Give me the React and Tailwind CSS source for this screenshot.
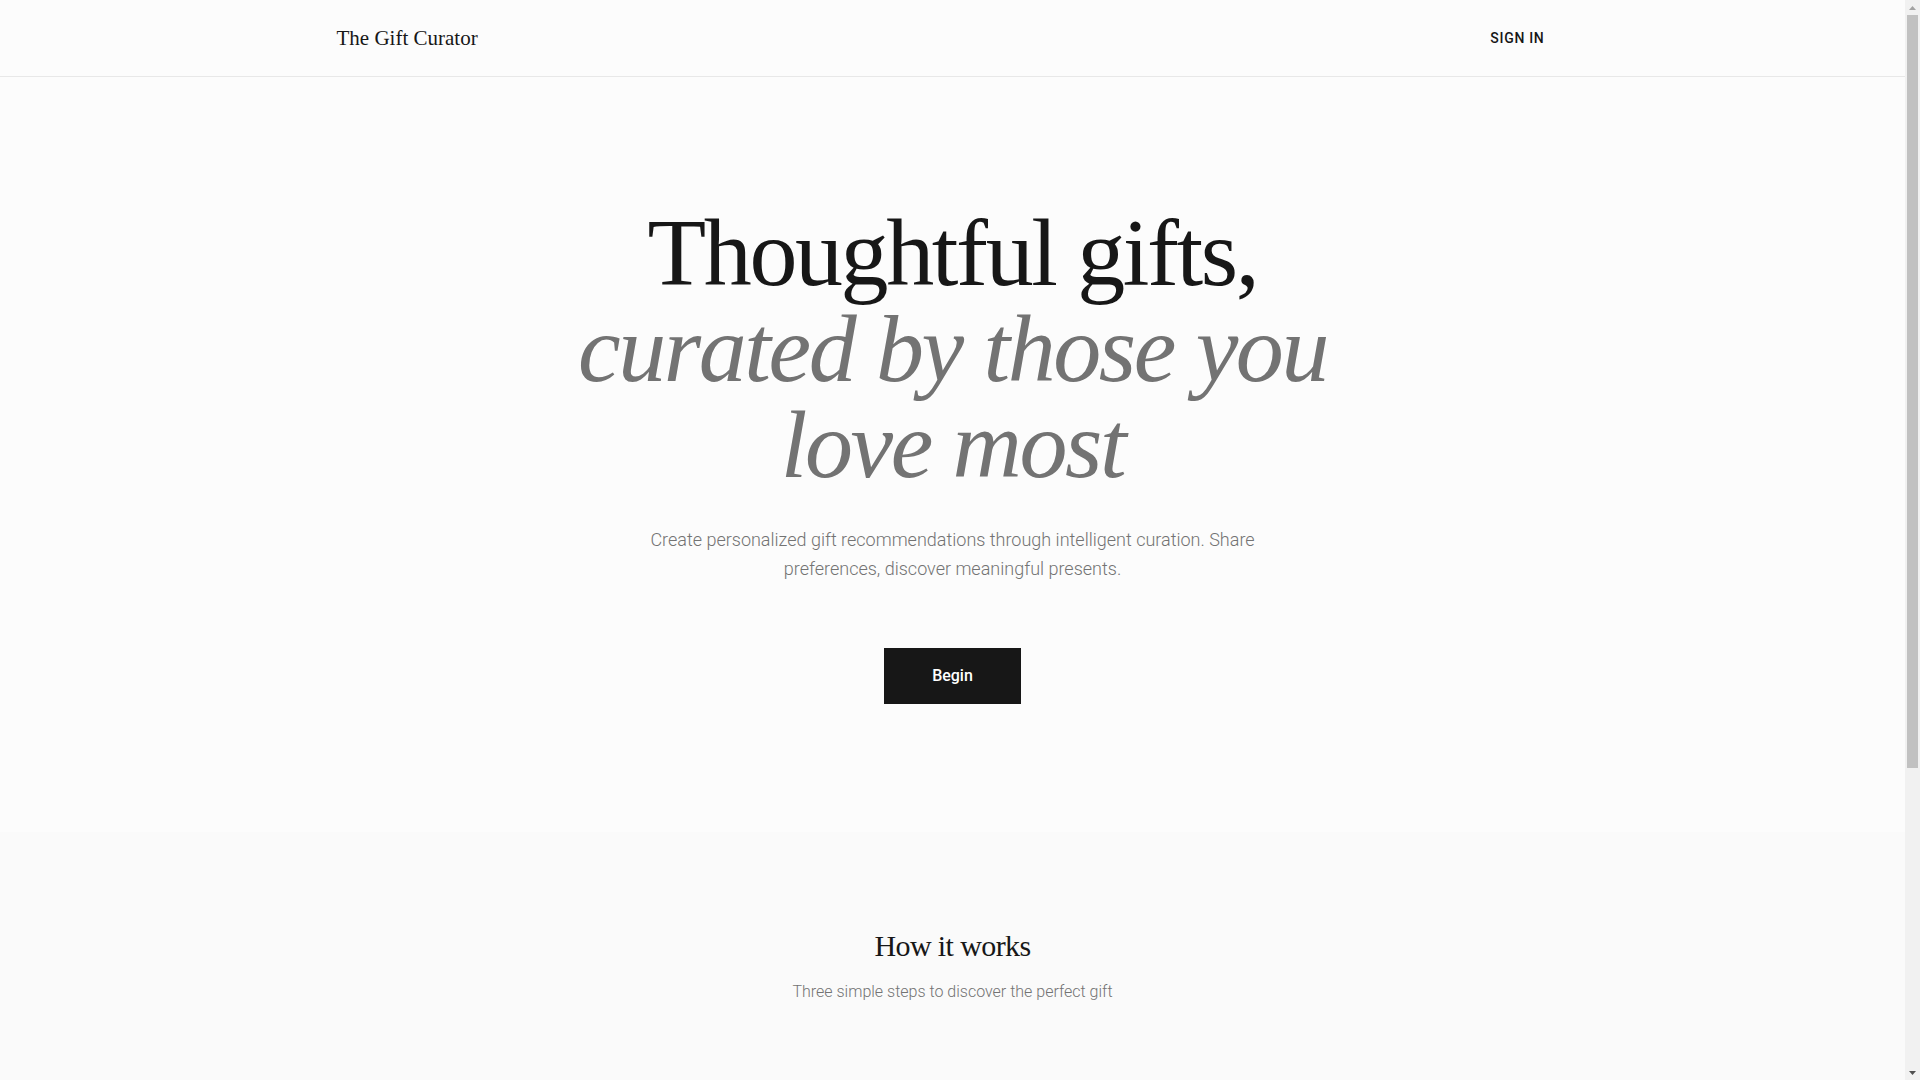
import React from "react";

function Header() {
  return (
    <header className="border-b border-[#e8e8e8] bg-[#fcfcfc]">
      <div className="mx-auto flex max-w-7xl items-center justify-between px-6 py-6">
        <a href="#" className="text-[21px] leading-7 text-[#171717] font-['Liberation_Serif',serif]">
          The Gift Curator
        </a>
        <button className="px-6 text-sm font-medium uppercase leading-7 tracking-wider text-[#171717]">
          Sign in
        </button>
      </div>
    </header>
  );
}

function Hero() {
  return (
    <section className="bg-[#fcfcfc] px-6 pb-32 pt-32">
      <div className="mx-auto flex max-w-4xl flex-col items-center text-center">
        <h1 className="text-8xl leading-none tracking-tight text-[#171717] font-['Liberation_Serif',serif]">
          Thoughtful gifts,
          <br />
          <span className="italic text-[#737373]">curated by those you love most</span>
        </h1>
        <p className="mt-8 max-w-2xl text-lg font-light leading-relaxed text-[#737373]">
          Create personalized gift recommendations through intelligent curation. Share
          preferences, discover meaningful presents.
        </p>
        <button className="mt-16 bg-[#171717] px-12 py-4 text-base font-medium text-white">
          Begin
        </button>
      </div>
    </section>
  );
}

const steps = [
  {
    n: "01",
    title: "Share preferences",
    text: "Tell us about the person you are shopping for: their interests, passions and the little things that make them smile.",
  },
  {
    n: "02",
    title: "Invite their circle",
    text: "Friends and family add their own insight, building a richer picture of what would truly delight.",
  },
  {
    n: "03",
    title: "Discover the gift",
    text: "Receive a thoughtfully curated selection of meaningful presents, chosen by those who know them best.",
  },
];

function HowItWorks() {
  return (
    <section className="bg-[#fafafa] px-6 pb-24 pt-24">
      <div className="mx-auto max-w-7xl">
        <div className="text-center">
          <h2 className="mb-4 text-3xl tracking-[-0.02em] text-[#171717] font-['Liberation_Serif',serif]">
            How it works
          </h2>
          <p className="text-base font-light text-[#737373]">Three simple steps to discover the perfect gift</p>
        </div>
        <div className="mt-16 grid grid-cols-3 gap-8">
          {steps.map((s) => (
            <div key={s.n} className="h-[342px] p-10 text-center">
              <div className="text-sm font-medium tracking-wide text-[#a3a3a3]">STEP {s.n}</div>
              <div className="mt-6 text-5xl leading-none text-[#171717] font-['Liberation_Serif',serif]">{s.n}</div>
              <h3 className="mt-8 text-xl text-[#171717] font-['Liberation_Serif',serif]">{s.title}</h3>
              <p className="mt-4 text-base font-light leading-relaxed text-[#737373]">{s.text}</p>
            </div>
          ))}
        </div>
      </div>
    </section>
  );
}

function ScrollTrack() {
  return (
    <div className="flex w-[15px] shrink-0 flex-col bg-[#f1f1f1]">
      <div className="flex h-[15px] items-center justify-center">
        <svg width="7" height="4" viewBox="0 0 7 4"><path d="M3.5 0L7 4H0z" fill="#a3a3a3" /></svg>
      </div>
      <div className="flex-1 px-[2px]">
        <div className="h-[753px] bg-[#c1c1c1]" />
      </div>
      <div className="flex h-[15px] items-center justify-center">
        <svg width="7" height="4" viewBox="0 0 7 4"><path d="M0 0H7L3.5 4z" fill="#505050" /></svg>
      </div>
    </div>
  );
}

export default function App() {
  return (
    <div className="flex h-screen bg-[#fafafa] font-['Roboto',sans-serif] antialiased">
      <main className="flex-1 overflow-y-auto [scrollbar-width:none]">
        <Header />
        <Hero />
        <HowItWorks />
      </main>
      <ScrollTrack />
    </div>
  );
}
